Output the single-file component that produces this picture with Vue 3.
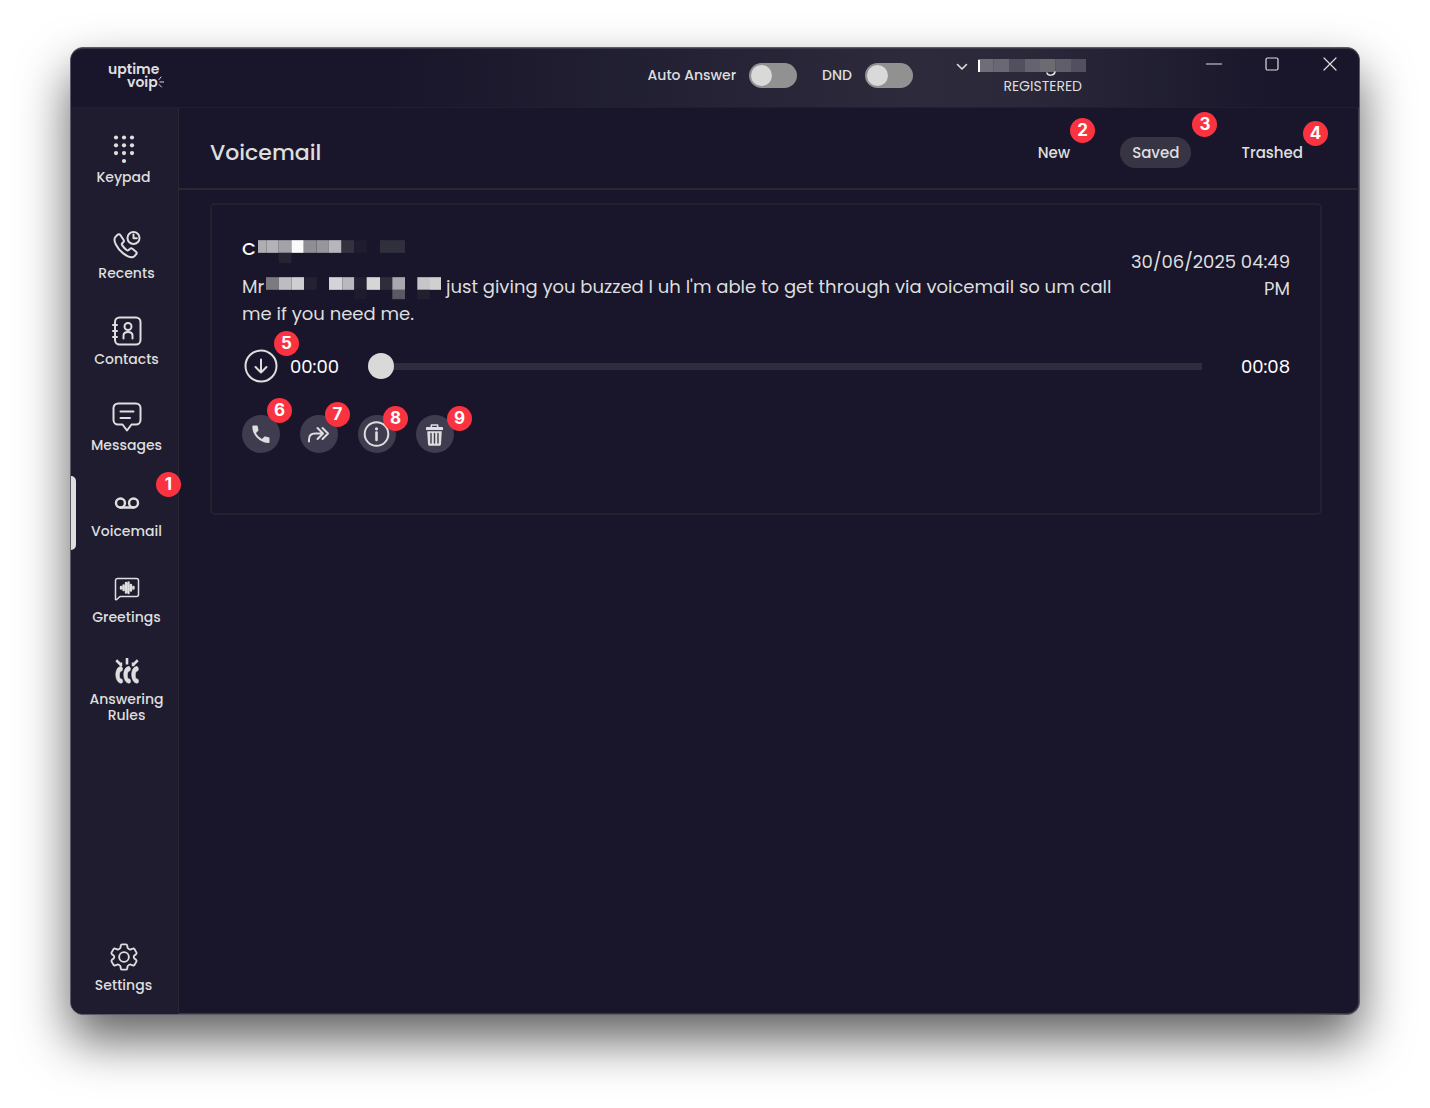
<script setup>
import { ref } from "vue";

const navItems = [
  { id: "keypad", label: "Keypad" },
  { id: "recents", label: "Recents" },
  { id: "contacts", label: "Contacts" },
  { id: "messages", label: "Messages" },
  { id: "voicemail", label: "Voicemail", step: 1 },
  { id: "greetings", label: "Greetings" },
  { id: "rules", label: "Answering Rules" },
];

const tabs = [
  { id: "new", label: "New", step: 2 },
  { id: "saved", label: "Saved", step: 3 },
  { id: "trashed", label: "Trashed", step: 4 },
];

const activeNav = ref("voicemail");
const activeTab = ref("saved");
const autoAnswer = ref(false);
const dnd = ref(false);
const position = ref(0);

// masked caller name: [x, y, width, height, fill]
const nameMask = [
  [0, 0, 25, 38, "#aeadb2"],
  [25, 0, 37, 38, "#b3b2b7"],
  [62, 0, 38, 38, "#a3a2a8"],
  [100, 0, 37, 38, "#fafafa"],
  [137, 0, 38, 38, "#8f8e94"],
  [175, 0, 37, 38, "#97969b"],
  [212, 0, 38, 38, "#b7b6bd"],
  [250, 0, 38, 38, "#34323f"],
  [288, 0, 37, 38, "#1f1c2f"],
  [365, 0, 75, 38, "#302f3c"],
  [62, 38, 38, 30, "#262433"],
];

const textMask = [
  [0, 0, 39, 38, "#7b7a80"],
  [39, 0, 38, 38, "#bdbcc0"],
  [77, 0, 37, 38, "#cfcfd1"],
  [114, 0, 38, 38, "#232132"],
  [189, 0, 40, 38, "#d4d4d6"],
  [229, 0, 36, 38, "#bab9be"],
  [265, 0, 37, 38, "#232132"],
  [302, 0, 40, 38, "#d6d6d6"],
  [342, 0, 37, 38, "#2f2d3a"],
  [379, 0, 38, 38, "#a9a8af"],
  [454, 0, 38, 38, "#c6c6c8"],
  [492, 0, 33, 38, "#d0d0d0"],
  [265, 38, 37, 28, "#1e1b2c"],
  [379, 38, 38, 28, "#5a5862"],
  [454, 38, 38, 28, "#22202f"],
];

const accountMask = ["#6f6e78", "#6a6973", "#52505f", "#656370", "#6e6b70", "#605e6b", "#524f60"];
</script>

<template>
  <div class="page">
    <div class="window">
      <header class="titlebar">
        <div class="logo">
          <span>uptime</span>
          <span class="logo-second">
            voip
            <svg class="logo-rays" viewBox="0 0 6 12" aria-hidden="true">
              <path d="M1 3.5 3 1M2 6h4M1 8.5 3.500 11" />
            </svg>
          </span>
        </div>

        <div class="toggles">
          <label class="toggle">
            <span>Auto Answer</span>
            <input v-model="autoAnswer" type="checkbox" />
          </label>
          <label class="toggle">
            <span>DND</span>
            <input v-model="dnd" type="checkbox" />
          </label>
        </div>

        <button class="account" type="button" aria-label="Account">
          <svg class="chevron" viewBox="0 0 12 8" aria-hidden="true">
            <path d="m1.500 1.500 4.500 4.500 4.500-4.500" />
          </svg>
          <span class="account-info">
            <svg class="account-mask" viewBox="0 0 108 18" aria-hidden="true">
              <rect v-for="(fill, i) in accountMask" :key="i" :x="i * 15.5" y="0" width="15.6" height="13" :fill="fill" />
              <rect x="0" y="1" width="2" height="12" fill="#fff" />
              <path d="M69 14c1 3 7 3 8-1" fill="none" stroke="#e4e4e4" stroke-width="1.500" />
            </svg>
            <span class="status">REGISTERED</span>
          </span>
        </button>

        <div class="controls">
          <button type="button" aria-label="Minimize">
            <svg viewBox="0 0 16 16"><path d="M0.500 8h15" /></svg>
          </button>
          <button type="button" aria-label="Maximize">
            <svg viewBox="0 0 16 16"><rect x="2" y="2" width="12" height="12" rx="1.500" /></svg>
          </button>
          <button type="button" aria-label="Close">
            <svg viewBox="0 0 16 16"><path d="m2 2 12 12M14 2 2 14" /></svg>
          </button>
        </div>
      </header>

      <div class="body">
        <nav class="sidebar">
          <button
            v-for="item in navItems"
            :key="item.id"
            type="button"
            class="nav-item"
            :class="[item.id, { active: item.id === activeNav }]"
            @click="activeNav = item.id"
          >
            <svg v-if="item.id === 'keypad'" class="solid" viewBox="0 0 30 30">
              <template v-for="y in [3.500, 11.300, 19.100]" :key="y">
                <circle v-for="x in [7, 15, 23]" :key="x" :cx="x" :cy="y" r="2.100" />
              </template>
              <circle cx="15" cy="27" r="2.100" />
            </svg>
            <svg v-else-if="item.id === 'recents'" viewBox="0 0 30 30">
              <path
                d="M5.600 4.800 3.500 6.900c-1.600 1.600-1.200 4.500.5 7.900 1.600 3.200 4 6.200 7.200 8.600 3.300 2.500 7.200 4.500 9.900 3.600 1-.3 2.300-1.600 3.200-2.800.6-.8.500-1.800-.3-2.500l-3.600-2.900c-.8-.6-1.800-.6-2.500.1l-1.300 1.200c-.6.500-1.400.4-2-.1-1.700-1.300-3.300-3-4.500-4.900-.4-.7-.3-1.500.3-2l.9-.9c.7-.7.8-1.600.2-2.400L8.300 5c-.7-.9-1.900-1-2.700-.2Z"
              />
              <circle cx="21.500" cy="8" r="6" />
              <path d="M21.500 4.500V8.300h3.300" />
            </svg>
            <svg v-else-if="item.id === 'contacts'" viewBox="0 0 30 30">
              <rect x="3" y="1.500" width="25.500" height="27" rx="4.500" />
              <path d="M1 9h4M1 15h4M1 21h4" />
              <circle cx="16" cy="10.500" r="3.500" />
              <path d="M11.500 22.500v-3c0-2.200 1.500-3.500 4.500-3.500s4.500 1.300 4.500 3.500v3" />
            </svg>
            <svg v-else-if="item.id === 'messages'" viewBox="0 0 30 30">
              <path d="M6 1.500h18a4.500 4.500 0 0 1 4.500 4.500v12A4.500 4.500 0 0 1 24 22.500h-4.500L15 28.500l-4.500-6H6a4.500 4.500 0 0 1-4.500-4.500v-12A4.500 4.500 0 0 1 6 1.500Z" />
              <path d="M8.500 9.500h13M8.500 16h9.500" />
            </svg>
            <svg v-else-if="item.id === 'voicemail'" class="tape" viewBox="0 0 30 30">
              <circle cx="8" cy="15" r="4.800" />
              <circle cx="22" cy="15" r="4.800" />
              <path d="M8 19.800h14" />
            </svg>
            <svg v-else-if="item.id === 'greetings'" class="thin" viewBox="0 0 30 30">
              <path d="M3.500 25.500V6.500a2 2 0 0 1 2-2h19a2 2 0 0 1 2 2v14a2 2 0 0 1-2 2H8L4.500 25.700Z" />
              <path class="wave" d="M9 13v1.500M11.500 11.500v4.500M14 9v9.500M16.500 8.500v10.500M19 11v5.500M21.500 13v1.500" />
            </svg>
            <svg v-else class="handsets" viewBox="0 0 30 30">
              <g v-for="x in [3, 11.500, 20]" :key="x" :transform="`translate(${x} 10)`">
                <path
                  d="M5.200.300C2.300.300 0 4 0 9c0 5 2.600 9 5.600 9 1.500 0 1.900-1.200 1.700-2.600-.2-1.500-1.100-2.100-2.700-2-1-2.500-1-5.500.2-7.900 1.500-.1 2.300-1 2.400-2.400C7.300 1.600 6.800.300 5.200.300Z"
                />
              </g>
              <path class="marks" d="M15 1v7M3.500 3.500l4.500 4.500M26.500 3.500l-4.500 4.500M8.500 6v4M21.500 6v4" />
            </svg>
            <span>{{ item.label }}</span>
            <b v-if="item.step" class="badge">{{ item.step }}</b>
          </button>

          <button type="button" class="nav-item settings">
            <svg viewBox="-1 -1 32 32">
              <path
                d="M13 1.500h4c.8 0 1.300.5 1.400 1.200l.4 2.300c.1.600.5 1 1 1.200l.8.500c.5.300 1.100.3 1.600.1l2.200-.8c.7-.3 1.400 0 1.800.6l2 3.500c.4.700.2 1.400-.3 1.900l-1.800 1.500c-.5.400-.7.900-.7 1.500s.2 1.100.7 1.500l1.800 1.500c.5.500.7 1.200.3 1.900l-2 3.500c-.4.600-1.100.9-1.800.6l-2.200-.8c-.5-.2-1.100-.2-1.600.1l-.8.500c-.5.200-.9.600-1 1.200l-.4 2.300c-.1.700-.6 1.200-1.400 1.200h-4c-.8 0-1.300-.5-1.400-1.200l-.4-2.300c-.1-.6-.5-1-1-1.200l-.8-.5c-.5-.3-1.100-.3-1.600-.1l-2.200.8c-.7.300-1.400 0-1.800-.6l-2-3.500c-.4-.7-.2-1.400.3-1.900l1.800-1.500c.5-.4.700-.9.700-1.500s-.2-1.100-.7-1.500l-1.800-1.500c-.5-.5-.7-1.200-.3-1.900l2-3.500c.4-.6 1.100-.9 1.800-.6l2.200.8c.5.200 1.100.2 1.600-.1l.8-.5c.5-.2.900-.6 1-1.200l.4-2.300c.1-.7.6-1.200 1.400-1.200Z"
              />
              <circle cx="15" cy="15" r="5.200" />
            </svg>
            <span>Settings</span>
          </button>
        </nav>

        <main class="content">
          <div class="page-head">
            <h1>Voicemail</h1>
            <div class="tabs">
              <button
                v-for="tab in tabs"
                :key="tab.id"
                type="button"
                class="tab"
                :class="['tab-' + tab.id, { active: tab.id === activeTab }]"
                @click="activeTab = tab.id"
              >
                {{ tab.label }}
                <b class="badge">{{ tab.step }}</b>
              </button>
            </div>
          </div>
          <!-- ./page-head -->

          <div class="list">
            <article class="card">
              <div class="summary">
                <div class="message">
                  <h2>
                    C<svg class="name-mask" viewBox="0 0 440 38" aria-hidden="true">
                      <rect v-for="(m, i) in nameMask" :key="i" :x="m[0]" :y="m[1]" :width="m[2]" :height="m[3]" :fill="m[4]" />
                    </svg>
                  </h2>
                  <p>
                    Mr<svg class="text-mask" viewBox="0 0 525 38" aria-hidden="true">
                      <rect v-for="(m, i) in textMask" :key="i" :x="m[0]" :y="m[1]" :width="m[2]" :height="m[3]" :fill="m[4]" />
                    </svg>
                    just giving you buzzed I uh I'm able to get through via voicemail so um call me if you need me.
                  </p>
                </div>
                <time datetime="2025-06-30T16:49">30/06/2025 04:49 PM</time>
              </div>

              <div class="player">
                <button type="button" class="download" aria-label="Download">
                  <svg viewBox="0 0 34 34">
                    <circle cx="17" cy="17" r="15.500" />
                    <path d="M17 10.500v13M11.500 18l5.500 5.500 5.500-5.500" />
                  </svg>
                  <b class="badge">5</b>
                </button>
                <span class="elapsed">00:00</span>
                <input v-model="position" class="seek" type="range" min="0" max="8" aria-label="Seek" />
                <span class="total">00:08</span>
              </div>

              <div class="actions">
                <button type="button" class="action call" aria-label="Call">
                  <svg class="solid" viewBox="0 0 38 38">
                    <path
                      d="M11.500 10.500h3.200c.6 0 1 .4 1.100 1l.6 3.400c.1.500 0 .9-.4 1.200l-2 1.900c1.500 2.800 3.300 4.600 6 6l2-2c.3-.3.700-.5 1.200-.4l3.300.7c.6.1 1 .5 1 1.100V27c0 .6-.4 1-1 1C18 28 10.300 20.300 10.300 11.600c0-.600.500-1.100 1.200-1.100Z"
                    />
                  </svg>
                  <b class="badge">6</b>
                </button>
                <button type="button" class="action forward" aria-label="Forward">
                  <svg viewBox="0 0 38 38">
                    <path d="M9 26.500v-2c0-4 2-6 6-6h7M17.500 13l5.500 5.500-5.500 5.500M22.500 13l5.500 5.500-5.500 5.500" />
                  </svg>
                  <b class="badge">7</b>
                </button>
                <button type="button" class="action info" aria-label="Info">
                  <svg viewBox="0 0 38 38">
                    <circle cx="18.500" cy="19" r="11.800" />
                    <path class="stem" d="M18.500 17.500v7.500" />
                    <circle class="dot" cx="18.500" cy="13.800" r="1.600" />
                  </svg>
                  <b class="badge">8</b>
                </button>
                <button type="button" class="action trash" aria-label="Delete">
                  <svg class="solid" viewBox="0 0 38 38">
                    <path d="M14.500 12v-1.500c0-.800.500-1.300 1.300-1.300h5.400c.8 0 1.300.5 1.300 1.300V12h3.500c.7 0 1 .3 1 1v2h-17v-2c0-.700.300-1 1-1Zm1.600 0h4.800v-1.200h-4.800Z" />
                    <path d="M11.200 16.200h14.600l-.8 13c-.1.900-.7 1.500-1.600 1.500h-9.800c-.9 0-1.500-.6-1.600-1.500Z" />
                    <path class="slots" d="M15 18.500v9.500M18.500 18.500v9.500M22 18.500v9.500" />
                  </svg>
                  <b class="badge">9</b>
                </button>
              </div>
            </article>
          </div>
        </main>
      </div>
    </div>
  </div>
</template>

<style>
body {
  margin: 0;
  background: #fff;
}
</style>

<style scoped>
* {
  box-sizing: border-box;
}

.page {
  display: flex;
  min-height: 100vh;
  padding: 47px 70px 93px;
  color: #dedede;
  font-family: Poppins, Inter, "Noto Sans", sans-serif;
}

button {
  padding: 0;
  border: 0;
  background: none;
  color: inherit;
  font: inherit;
  cursor: pointer;
}

svg {
  fill: none;
  stroke: #dedede;
  stroke-width: 2;
  stroke-linecap: round;
  stroke-linejoin: round;
}

svg rect[fill] {
  stroke: none;
}

svg.solid {
  fill: #dedede;
  stroke: none;
}

.window {
  display: flex;
  flex: 1;
  flex-direction: column;
  border: 1px solid #5c5a64;
  border-radius: 13px;
  background: #19162b;
  box-shadow: 0 25px 50px rgba(0, 0, 0, 0.62), inset 0 0 0 1px #3a3846;
}

/* title bar */
.titlebar {
  display: flex;
  align-items: flex-start;
  height: 60px;
  border-top: 1px solid #3a3846;
  border-bottom: 1px solid #211e31;
  border-radius: 12px 12px 0 0;
  background: linear-gradient(90deg, #19162b 25%, #2c2a3b 65%, #2a2839 74%, #19162b 94%);
}

.logo {
  display: flex;
  flex-direction: column;
  margin: 14px 0 0 37px;
  font-size: 14px;
  font-weight: 600;
  line-height: 13px;
}

.logo-second {
  display: flex;
  padding-left: 19px;
}

.logo-rays {
  width: 6px;
  height: 12px;
  stroke-width: 1;
}

.toggles {
  display: flex;
  gap: 25px;
  margin: 14px 43px 0 auto;
}

.toggle {
  display: flex;
  align-items: center;
  gap: 13px;
  font-size: 14px;
  font-weight: 500;
}

.toggle input {
  width: 48px;
  height: 25px;
  margin: 0;
  padding: 2px;
  border-radius: 13px;
  background: #919191;
  appearance: none;
  cursor: pointer;
}

.toggle input::before {
  display: block;
  width: 21px;
  height: 21px;
  border-radius: 50%;
  background: #d9d9d9;
  content: "";
}

.toggle input:checked::before {
  margin-left: auto;
}

.account {
  display: flex;
  align-items: flex-start;
  gap: 10px;
  margin: 10px 99px 0 0;
}

.chevron {
  width: 12px;
  height: 8px;
  margin-top: 4px;
  stroke-width: 1.6;
}

.account-info {
  display: flex;
  flex-direction: column;
  align-items: flex-end;
}

.account-mask {
  width: 108px;
  height: 18px;
}

.status {
  padding-right: 4px;
  font-size: 14px;
  line-height: 18px;
}

.controls {
  display: flex;
}

.controls button {
  display: grid;
  place-items: center;
  width: 58px;
  height: 30px;
}

.controls svg {
  width: 16px;
  height: 16px;
  stroke-width: 1.2;
}

.body {
  display: flex;
  flex: 1;
}

/* sidebar */
.sidebar {
  display: flex;
  flex-direction: column;
  gap: 12px;
  width: 108px;
  padding: 14px 0 10px;
  border-right: 1px solid #2a2731;
  border-radius: 0 0 0 12px;
  background: #1f1c2f;
}

.nav-item {
  position: relative;
  display: flex;
  flex-direction: column;
  align-items: center;
  gap: 5px;
  min-height: 74px;
  padding: 12px 16px 0 20px;
  font-size: 14px;
  font-weight: 500;
  line-height: 16px;
}

.nav-item svg {
  width: 30px;
  height: 30px;
}

.nav-item.keypad {
  margin-bottom: 10px;
}

.nav-item.keypad,
.nav-item.settings {
  padding-right: 18px;
  padding-left: 16px;
}

.nav-item.settings {
  margin-top: auto;
}

.nav-item.rules {
  padding-top: 8px;
}

.nav-item.active::before {
  position: absolute;
  top: 0;
  left: 0;
  width: 5px;
  height: 74px;
  border-radius: 0 5px 5px 0;
  background: #dedede;
  content: "";
}

.nav-item .thin {
  stroke-width: 1.5;
}

.nav-item .wave {
  stroke-width: 2.4;
}

.nav-item .tape {
  width: 28px;
  stroke-width: 2.6;
}

.nav-item .handsets {
  width: 28px;
  fill: #dedede;
  stroke: #dedede;
  stroke-width: 0.6;
}

.handsets .marks {
  fill: none;
  stroke-width: 2.8;
  stroke-linecap: butt;
}

/* numbered markers */
.badge {
  position: absolute;
  z-index: 1;
  display: grid;
  place-items: center;
  width: 25px;
  height: 25px;
  border-radius: 50%;
  background: #fb3340;
  color: #fff;
  font-family: Inter, sans-serif;
  font-size: 17px;
  font-weight: 700;
  line-height: 25px;
}

.nav-item .badge {
  top: -4px;
  right: -3px;
}

/* content */
.content {
  flex: 1;
  min-width: 0;
}

.page-head {
  display: flex;
  align-items: center;
  justify-content: space-between;
  height: 82px;
  padding: 8px 44px 0 31px;
  border-bottom: 2px solid #2a2731;
}

h1 {
  margin: 0;
  font-size: 22px;
  font-weight: 500;
}

.tabs {
  display: flex;
  gap: 38px;
}

.tab {
  position: relative;
  height: 31px;
  padding: 0 12px;
  border-radius: 16px;
  font-size: 15px;
  font-weight: 500;
  line-height: 31px;
}

.tab.active {
  background: #373544;
}

.tab .badge {
  top: -19px;
  right: -13px;
}

.tab-saved .badge {
  top: -25px;
  right: -26px;
}

.tab-trashed .badge {
  top: -16px;
}

.list {
  padding: 13px 37px 31px 31px;
}

.card {
  min-height: 312px;
  padding: 30px;
  border: 2px solid #24212e;
  border-radius: 5px;
}

.summary {
  display: flex;
  justify-content: space-between;
  gap: 12px;
  font-size: 18px;
  line-height: 27px;
}

.message {
  flex: 1;
}

.message h2 {
  margin: 0 0 11px;
  color: #fff;
  font-size: 18px;
  font-weight: 500;
}

.message p {
  margin: 0;
}

.name-mask {
  width: 147px;
  height: 13px;
  margin-left: 2px;
  overflow: visible;
  vertical-align: 2px;
}

.text-mask {
  width: 175px;
  height: 13px;
  margin-left: 2px;
  overflow: visible;
  vertical-align: 3px;
}

time {
  width: 160px;
  padding-top: 13px;
  text-align: right;
}

.player {
  display: flex;
  align-items: center;
  margin-top: 22px;
  padding-left: 2px;
  color: #fff;
  font-size: 18px;
}

.download {
  position: relative;
  width: 34px;
  height: 34px;
}

.download svg {
  display: block;
}

.download .badge {
  top: -18px;
  right: -21px;
}

.elapsed {
  width: 90px;
  padding-left: 12px;
}

.seek {
  flex: 1;
  height: 26px;
  margin: 0;
  background: linear-gradient(#2f2d3d, #2f2d3d) center / 100% 7px no-repeat;
  appearance: none;
  cursor: pointer;
}

.seek::-webkit-slider-thumb {
  width: 26px;
  height: 26px;
  border-radius: 50%;
  background: #d9d9d9;
  appearance: none;
}

.total {
  width: 88px;
  text-align: right;
}

.actions {
  display: flex;
  gap: 20px;
  margin-top: 32px;
}

.action {
  position: relative;
  width: 38px;
  height: 38px;
  border-radius: 50%;
  background: #3f3c50;
}

.action svg {
  display: block;
}

.action .badge {
  top: -9px;
  right: -12px;
}

.call .badge {
  top: -17px;
}

.forward .badge {
  top: -13px;
}

.trash .badge {
  right: -18px;
}

.info .stem {
  stroke-width: 2.6;
}

.info .dot {
  fill: #dedede;
  stroke: none;
}

.trash .slots {
  stroke: #3f3c50;
  stroke-width: 1.4;
}
</style>
